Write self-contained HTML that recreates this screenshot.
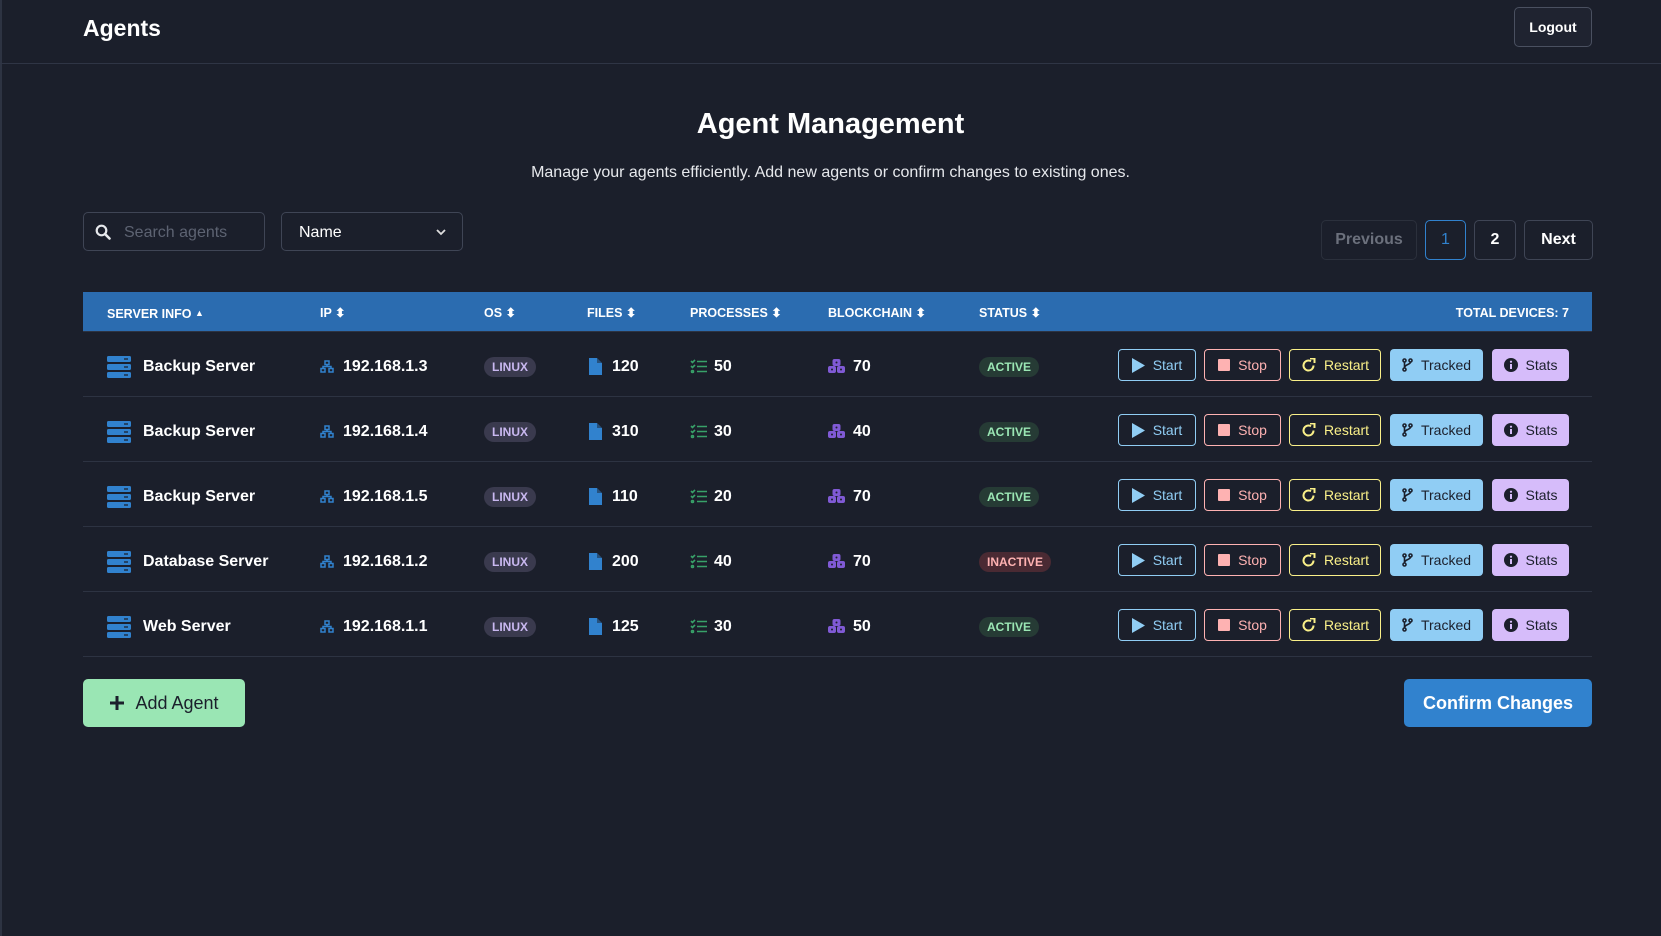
<!DOCTYPE html>
<html><head><meta charset="utf-8"><style>
*{box-sizing:border-box;margin:0;padding:0}
body{width:1661px;height:936px;background:#1b1f2b;font-family:"Liberation Sans",sans-serif;color:#fff;position:relative;overflow:hidden}
.a{position:absolute}
.hdrline{left:0;top:63px;width:1661px;height:1px;background:#2f3545}
.btn{position:absolute;display:flex;align-items:center;justify-content:center;border-radius:5px;font-size:14px}
.th{position:absolute;top:293px;height:40px;line-height:40px;font-size:12.5px;font-weight:bold;color:#fff}
.row{position:absolute;left:83px;width:1509px;height:65px;border-bottom:1px solid #2d3342}
.cell{position:absolute;top:2px;height:65px;display:flex;align-items:center;font-weight:bold;font-size:16px}
.badge{font-size:12px;font-weight:bold;border-radius:10px;padding:3px 8px}
.ab{position:absolute;top:17px;height:32px;border-radius:4px;font-size:14px;display:flex;align-items:center;justify-content:center;gap:8px}
</style></head><body>
<div class="a" style="left:0;top:0;width:2px;height:936px;background:#2d3342"></div>
<div class="a" style="left:83px;top:15px;font-size:23px;font-weight:bold">Agents</div>
<div class="btn" style="left:1514px;top:7px;width:78px;height:40px;border:1px solid #4a5060;font-weight:bold;font-size:14px;background:#1f2330">Logout</div>
<div class="a hdrline"></div>
<div class="a" style="left:0;width:1661px;top:108px;text-align:center;font-size:29px;font-weight:bold">Agent Management</div>
<div class="a" style="left:0;width:1661px;top:164px;text-align:center;font-size:16px;color:#e6e8ec">Manage your agents efficiently. Add new agents or confirm changes to existing ones.</div>
<div class="a" style="left:83px;top:212px;width:182px;height:39px;border:1px solid #3f4555;border-radius:5px">
<svg class="a" style="left:11px;top:11px" width="16" height="16" viewBox="0 0 16 16"><circle cx="6.5" cy="6.5" r="4.8" fill="none" stroke="#e6e8ec" stroke-width="2.2"/><path d="M10 10l4.5 4.5" stroke="#e6e8ec" stroke-width="2.6" stroke-linecap="round"/></svg>
<span class="a" style="left:40px;top:11px;font-size:16px;color:#5d6372">Search agents</span></div>
<div class="a" style="left:281px;top:212px;width:182px;height:39px;border:1px solid #3f4555;border-radius:5px">
<span class="a" style="left:17px;top:11px;font-size:16px">Name</span>
<svg class="a" style="left:154px;top:15px" width="10" height="8" viewBox="0 0 10 8"><path d="M1 2l4 4 4-4" fill="none" stroke="#ddd" stroke-width="1.8"/></svg></div>
<div class="btn" style="left:1321px;top:220px;width:96px;height:40px;border:1px solid #2b303c;color:#6b707c;font-weight:bold;font-size:16px">Previous</div>
<div class="btn" style="left:1425px;top:220px;width:41px;height:40px;border:1px solid #3182ce;color:#3182ce;font-size:16px">1</div>
<div class="btn" style="left:1474px;top:220px;width:42px;height:40px;border:1px solid #3f4555;font-weight:bold;font-size:16px">2</div>
<div class="btn" style="left:1524px;top:220px;width:69px;height:40px;border:1px solid #3f4555;font-weight:bold;font-size:16px">Next</div>
<div class="a" style="left:83px;top:292px;width:1509px;height:40px;background:#2b6cb0;border-bottom:1px solid #2d3342"></div>
<div class="th" style="left:107px">SERVER INFO <span style="font-size:9px;vertical-align:2px">▲</span></div>
<div class="th" style="left:320px">IP ⬍</div>
<div class="th" style="left:484px">OS ⬍</div>
<div class="th" style="left:587px">FILES ⬍</div>
<div class="th" style="left:690px">PROCESSES ⬍</div>
<div class="th" style="left:828px">BLOCKCHAIN ⬍</div>
<div class="th" style="left:979px">STATUS ⬍</div>
<div class="th" style="left:1400px;width:169px;text-align:right">TOTAL DEVICES: 7</div>
<div id="rows"></div>
<div class="btn" style="left:83px;top:679px;width:162px;height:48px;background:#9ae6b4;color:#1b1f2b;font-size:18px;gap:10px;border-radius:5px"><svg width="16" height="16" viewBox="0 0 16 16"><path d="M8 1v14M1 8h14" stroke="#1b1f2b" stroke-width="3"/></svg>Add Agent</div>
<div class="btn" style="left:1404px;top:679px;width:188px;height:48px;background:#3182ce;color:#fff;font-size:18px;font-weight:bold;border-radius:5px">Confirm Changes</div>
<script>
const data=[["Backup Server","192.168.1.3","120","50","70",1],["Backup Server","192.168.1.4","310","30","40",1],["Backup Server","192.168.1.5","110","20","70",1],["Database Server","192.168.1.2","200","40","70",0],["Web Server","192.168.1.1","125","30","50",1]];
let h="";
data.forEach((d,i)=>{const top=332+i*65;
h+=`<div class="row" style="top:${top}px">
<div class="cell" style="left:24px"><svg width="24" height="22" viewBox="0 0 24 22"><rect x="0" y="0" width="24" height="6" rx="1.5" fill="#3182ce"/><rect x="0" y="8" width="24" height="6" rx="1.5" fill="#3182ce"/><rect x="0" y="16" width="24" height="6" rx="1.5" fill="#3182ce"/><path d="M17 3h4M17 11h4M17 19h4" stroke="#1b1f2b" stroke-width="1.2"/></svg><span style="margin-left:12px">${d[0]}</span></div>
<div class="cell" style="left:237px"><svg width="14" height="13" viewBox="0 0 14 13"><g fill="none" stroke="#3182ce" stroke-width="1.5"><rect x="5" y="1" width="4" height="3.5"/><rect x="1" y="8.5" width="4" height="3.5"/><rect x="9" y="8.5" width="4" height="3.5"/><path d="M7 4.5v2M3 8.5v-2h8v2"/></g></svg><span style="margin-left:9px">${d[1]}</span></div>
<div class="cell" style="left:401px"><span class="badge" style="background:#3a3a4e;color:#c9b8f0">LINUX</span></div>
<div class="cell" style="left:506px"><svg width="13" height="17" viewBox="0 0 13 17"><path d="M0 0h8l5 5v12H0z" fill="#3182ce"/><path d="M8 0v5h5" fill="#1b1f2b" opacity=".5"/></svg><span style="margin-left:10px">${d[2]}</span></div>
<div class="cell" style="left:607px"><svg width="17" height="15" viewBox="0 0 17 15"><g stroke="#38a169" stroke-width="1.6" fill="none"><path d="M1 2l1.5 1.5L5 1M1 7l1.5 1.5L5 6"/><path d="M7 2.5h10M7 7.5h10M7 12.5h10"/><circle cx="2.5" cy="12.5" r="1"/></g></svg><span style="margin-left:7px">${d[3]}</span></div>
<div class="cell" style="left:745px"><svg width="17" height="15" viewBox="0 0 17 15"><g fill="#805ad5"><rect x="4.5" y="0" width="8" height="7" rx="2"/><rect x="0" y="7" width="8" height="7" rx="2"/><rect x="9" y="7" width="8" height="7" rx="2"/></g><g fill="#1b1f2b"><circle cx="8.5" cy="3.5" r="1"/><circle cx="4" cy="10.5" r="1"/><circle cx="13" cy="10.5" r="1"/></g></svg><span style="margin-left:8px">${d[4]}</span></div>
<div class="cell" style="left:896px">${d[5]?'<span class="badge" style="background:#263b35;color:#9ae6b4">ACTIVE</span>':'<span class="badge" style="background:#4a2a33;color:#feb2b2">INACTIVE</span>'}</div>
<div class="ab" style="left:1035px;width:78px;border:1px solid #90cdf4;color:#90cdf4"><svg width="13" height="15" viewBox="0 0 13 15"><path d="M0 0l13 7.5L0 15z" fill="#90cdf4"/></svg>Start</div>
<div class="ab" style="left:1121px;width:77px;border:1px solid #feb2b2;color:#feb2b2"><svg width="12" height="12"><rect width="12" height="12" rx="1" fill="#feb2b2"/></svg>Stop</div>
<div class="ab" style="left:1206px;width:92px;border:1px solid #faf089;color:#faf089"><svg width="15" height="15" viewBox="0 0 15 15"><path d="M12.5 7.5A5 5 0 1 1 10 3.2" fill="none" stroke="#faf089" stroke-width="2"/><path d="M9 0.5h4.5V5" fill="none" stroke="#faf089" stroke-width="2"/></svg>Restart</div>
<div class="ab" style="left:1307px;width:93px;background:#90cdf4;color:#1b1f2b"><svg width="11" height="14" viewBox="0 0 11 14"><g fill="none" stroke="#1b1f2b" stroke-width="1.6"><circle cx="2.5" cy="2.5" r="1.5"/><circle cx="2.5" cy="11.5" r="1.5"/><circle cx="8.5" cy="2.5" r="1.5"/><path d="M2.5 4v6M8.5 4c0 3-6 2-6 6"/></g></svg>Tracked</div>
<div class="ab" style="left:1409px;width:77px;background:#d6bcfa;color:#1b1f2b"><svg width="14" height="14" viewBox="0 0 14 14"><circle cx="7" cy="7" r="7" fill="#1b1f2b"/><path d="M7 6v5" stroke="#d6bcfa" stroke-width="2"/><circle cx="7" cy="3.7" r="1.1" fill="#d6bcfa"/></svg>Stats</div>
</div>`;});
document.getElementById("rows").innerHTML=h;
</script>
</body></html>
